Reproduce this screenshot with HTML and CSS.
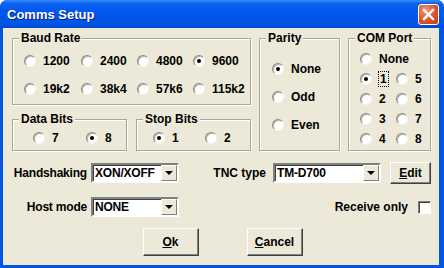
FILE: index.html
```html
<!DOCTYPE html>
<html lang="en">
  <head>
    <meta charset="UTF-8" />
    <title>Comms Setup</title>
    <link rel="stylesheet" href="styles.css">
  </head>
  <body>
    <div class="window">
      <div class="titlebar">
        <span class="title">Comms Setup</span>
        <span class="close">
          <svg width="13" height="13" viewBox="0 0 13 13">
            <path d="M2 2 L11 11 M11 2 L2 11" stroke="#fff" stroke-width="2.4" stroke-linecap="square" />
          </svg>
        </span>
      </div>

      <div class="client">
        <div class="groups">
          <div class="left-col">
            <fieldset class="group baud">
              <legend>Baud Rate</legend>
              <div class="opts">
                <label class="radio"><span class="dot"></span>1200</label>
                <label class="radio"><span class="dot"></span>2400</label>
                <label class="radio"><span class="dot"></span>4800</label>
                <label class="radio"><span class="dot on"></span>9600</label>
                <label class="radio"><span class="dot"></span>19k2</label>
                <label class="radio"><span class="dot"></span>38k4</label>
                <label class="radio"><span class="dot"></span>57k6</label>
                <label class="radio"><span class="dot"></span>115k2</label>
              </div>
            </fieldset>

            <div class="bits">
              <fieldset class="group data-bits">
                <legend>Data Bits</legend>
                <div class="opts">
                  <label class="radio"><span class="dot"></span>7</label>
                  <label class="radio"><span class="dot on"></span>8</label>
                </div>
              </fieldset>
              <fieldset class="group stop-bits">
                <legend>Stop Bits</legend>
                <div class="opts">
                  <label class="radio"><span class="dot on"></span>1</label>
                  <label class="radio"><span class="dot"></span>2</label>
                </div>
              </fieldset>
            </div>
          </div>

          <fieldset class="group parity">
            <legend>Parity</legend>
            <div class="opts">
              <label class="radio"><span class="dot on"></span>None</label>
              <label class="radio"><span class="dot"></span>Odd</label>
              <label class="radio"><span class="dot"></span>Even</label>
            </div>
          </fieldset>

          <fieldset class="group com">
            <legend>COM Port</legend>
            <div class="opts">
              <label class="radio wide"><span class="dot"></span>None</label>
              <label class="radio"><span class="dot on"></span><span class="focus">1</span></label>
              <label class="radio"><span class="dot"></span>5</label>
              <label class="radio"><span class="dot"></span>2</label>
              <label class="radio"><span class="dot"></span>6</label>
              <label class="radio"><span class="dot"></span>3</label>
              <label class="radio"><span class="dot"></span>7</label>
              <label class="radio"><span class="dot"></span>4</label>
              <label class="radio"><span class="dot"></span>8</label>
            </div>
          </fieldset>
        </div>

        <div class="row first">
          <div class="field">
            <span class="lbl">Handshaking</span>
            <div class="combo"><span class="val">XON/XOFF</span><span class="drop"></span></div>
          </div>
          <div class="field">
            <span>TNC type</span>
            <div class="combo tnc"><span class="val">TM-D700</span><span class="drop"></span></div>
            <button class="btn edit"><u>E</u>dit</button>
          </div>
        </div>

        <div class="row">
          <div class="field">
            <span class="lbl">Host mode</span>
            <div class="combo"><span class="val">NONE</span><span class="drop"></span></div>
          </div>
          <div class="field receive">
            <span>Receive only</span>
            <span class="check"></span>
          </div>
        </div>

        <div class="buttons">
          <button class="btn"><u>O</u>k</button>
          <button class="btn"><u>C</u>ancel</button>
        </div>
      </div>
    </div>
  </body>
</html>
```

FILE: styles.css
```css
body {
  margin: 0;
  background: #fff;
  font-family: "Liberation Sans", Arial, sans-serif;
  font-size: 12px;
  font-weight: bold;
  color: #000;
}

.window {
  width: 444px;
  height: 268px;
  display: flex;
  flex-direction: column;
  background: #0055e5;
  border-radius: 7px 7px 0 0;
  overflow: hidden;
}

.titlebar {
  height: 28px;
  flex: none;
  display: flex;
  align-items: center;
  justify-content: space-between;
  padding: 0 5px 0 7px;
  background: linear-gradient(to bottom, #3d8ff5 0%, #0b62f0 12%, #0058ee 40%, #0054e3 85%, #0048cf 100%);
}

.title {
  color: #fff;
  font-size: 13px;
  text-shadow: 1px 1px 0 #0a1f8a;
}

.close {
  width: 19px;
  height: 19px;
  display: flex;
  align-items: center;
  justify-content: center;
  border: 1px solid #fff;
  border-radius: 3px;
  background: radial-gradient(circle at 35% 30%, #f09a7c, #d9532e 55%, #c0381a);
}

.client {
  flex: 1;
  margin: 0 5px 3px 3px;
  padding: 3px 8px 0 9px;
  background: #ece9d8;
}

.groups {
  display: flex;
  gap: 8px;
}

.left-col {
  width: 239px;
  display: flex;
  flex-direction: column;
  gap: 7px;
}

.group {
  margin: 0;
  padding: 0;
  border: 1px solid #aca899;
  box-shadow: inset 1px 1px 0 #fff, 1px 1px 0 #fff;
  min-width: 0;
}

.group legend {
  margin-left: 6px;
  padding: 0 2px;
  line-height: 14px;
  background: #ece9d8;
}

.radio {
  display: flex;
  align-items: center;
  gap: 7px;
  white-space: nowrap;
}

.dot {
  width: 10px;
  height: 10px;
  flex: none;
  position: relative;
  border: 1px solid;
  border-color: #8d8b80 #f4f3ee #f4f3ee #8d8b80;
  border-radius: 50%;
  background: #fff;
  box-shadow: inset 1px 1px 0 #b5b3a8;
}

.dot.on::after {
  content: "";
  position: absolute;
  left: 3px;
  top: 3px;
  width: 4px;
  height: 4px;
  border-radius: 50%;
  background: #000;
}

.focus {
  outline: 1px dotted #000;
  outline-offset: 0;
  padding: 0 1px;
}

.baud .opts {
  display: grid;
  grid-template-columns: 57px 56px 56px 56px;
  grid-auto-rows: 28px;
  padding: 2px 0 1px 11px;
}

.bits {
  display: flex;
  gap: 9px;
}

.data-bits {
  width: 115px;
}

.stop-bits {
  width: 115px;
}

.bits .opts {
  display: grid;
  grid-auto-rows: 24px;
}

.data-bits .opts {
  grid-template-columns: 53px 40px;
  padding-left: 20px;
}

.stop-bits .opts {
  grid-template-columns: 52px 40px;
  padding-left: 16px;
}

.parity {
  width: 81px;
}

.parity .opts {
  display: grid;
  grid-auto-rows: 28px;
  padding: 10px 0 0 12px;
}

.com {
  width: 83px;
}

.com .opts {
  display: grid;
  grid-template-columns: 36px 36px;
  grid-auto-rows: 20px;
  padding: 4px 0 0 11px;
}

.com .wide {
  grid-column: span 2;
}

.row {
  display: flex;
  justify-content: space-between;
  align-items: center;
  height: 22px;
  margin-top: 12px;
}

.row.first {
  margin-top: 11px;
}

.field {
  display: flex;
  align-items: center;
  gap: 7px;
}

.lbl {
  width: 75px;
  text-align: right;
  margin-right: -3px;
  letter-spacing: -0.2px;
}

.combo {
  width: 83px;
  height: 16px;
  display: flex;
  align-items: center;
  justify-content: space-between;
  padding: 0 0 0 1px;
  border: 2px solid;
  border-color: #808080 #fff #fff #808080;
  box-shadow: inset 1px 1px 0 #404040;
  background: #fff;
}

.combo.tnc {
  width: 103px;
}

.val {
  padding-left: 1px;
  letter-spacing: -0.2px;
}

.drop {
  width: 14px;
  height: 14px;
  position: relative;
  border: 1px solid;
  border-color: #fff #808080 #808080 #fff;
  background: #ece9d8;
}

.drop::after {
  content: "";
  position: absolute;
  left: 3px;
  top: 5px;
  border-left: 4px solid transparent;
  border-right: 4px solid transparent;
  border-top: 4px solid #000;
}

.btn {
  width: 56px;
  height: 28px;
  padding: 0;
  font: inherit;
  color: #000;
  background: #ece9d8;
  border: 1px solid;
  border-color: #fff #404040 #404040 #fff;
  box-shadow: inset -1px -1px 0 #808080;
}

.btn.edit {
  width: 41px;
  height: 22px;
  margin-left: 2px;
}

.receive {
  gap: 10px;
}

.check {
  width: 11px;
  height: 11px;
  border: 1px solid;
  border-color: #808080 #fff #fff #808080;
  box-shadow: inset 1px 1px 0 #404040;
  background: #fff;
}

.buttons {
  display: flex;
  justify-content: center;
  gap: 48px;
  margin-top: 10px;
  padding-left: 2px;
}
```
